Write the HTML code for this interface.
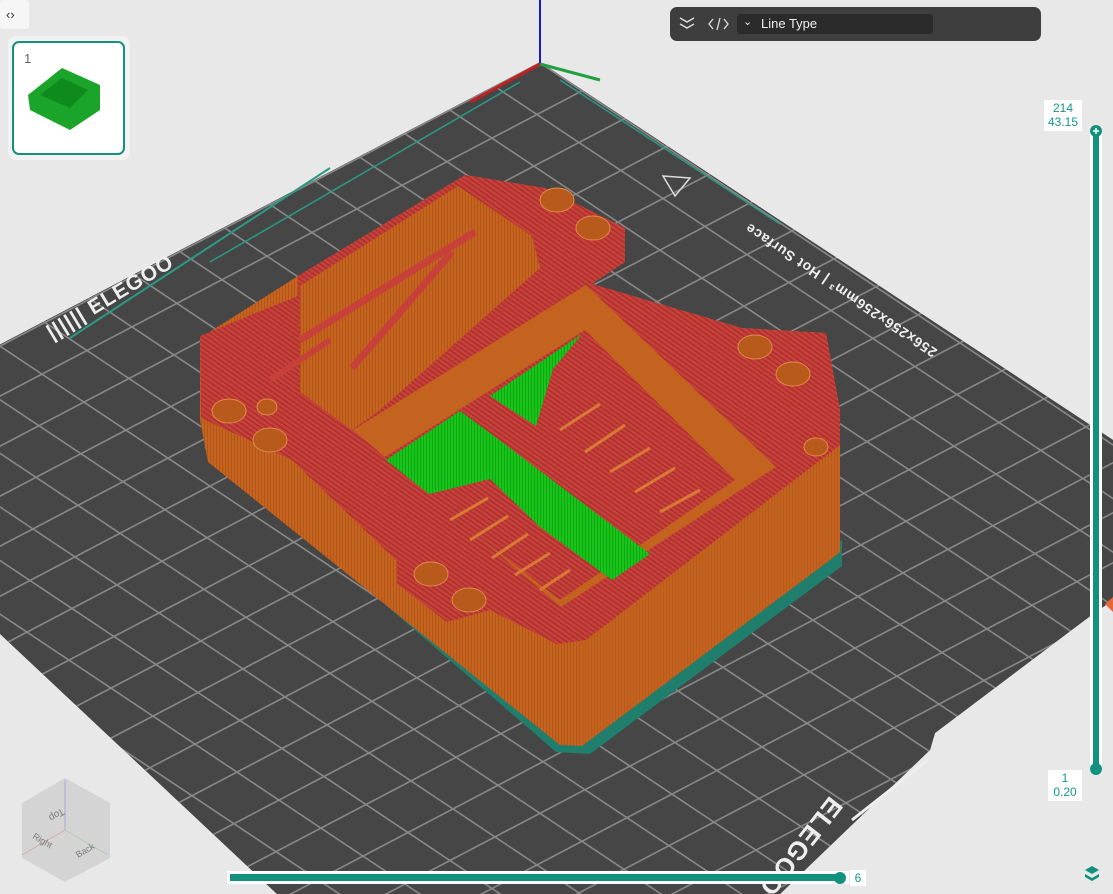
<!DOCTYPE html>
<html><head><meta charset="utf-8"><style>
html,body{margin:0;padding:0;width:1113px;height:894px;overflow:hidden;background:#e8e8e8;font-family:"Liberation Sans",sans-serif}
svg{position:absolute;left:0;top:0}
.tb{position:absolute;left:670px;top:7px;width:371px;height:34px;background:#3e3e3e;border-radius:7px}
.dd{position:absolute;left:737px;top:14px;width:196px;height:20px;background:#2b2b2b;border-radius:3px;color:#eee;font-size:13px;line-height:20px}
.lbl{position:absolute;background:#fff;color:#15968a;font-size:12px;text-align:center;line-height:14px}
</style></head><body>
<svg width="1113" height="894" viewBox="0 0 1113 894">
<defs>
<pattern id="grid" width="100" height="100" patternUnits="userSpaceOnUse" patternTransform="matrix(0.42 0.28 -0.45 0.236 540 62)">
<rect width="100" height="100" fill="#464646"/>
<rect x="0" y="0" width="100" height="3.5" fill="#8a8a8a"/>
<rect x="0" y="0" width="3.5" height="100" fill="#8a8a8a"/>
</pattern>
<pattern id="red" width="4" height="4" patternUnits="userSpaceOnUse" patternTransform="rotate(35)">
<rect width="4" height="4" fill="#c8403a"/><rect width="4" height="1.4" fill="#a8302e"/>
</pattern>
<pattern id="org" width="3" height="6" patternUnits="userSpaceOnUse">
<rect width="3" height="6" fill="#c6631f"/><rect width="1" height="6" fill="#b2561a"/>
</pattern>
<pattern id="grn" width="3" height="3" patternUnits="userSpaceOnUse">
<rect width="3" height="3" fill="#19c41a"/><rect width="1" height="3" fill="#10a812"/>
</pattern>
<clipPath id="bedc"><polygon points="540,62 1113,440 1113,600 1089,617 935,733 930,750 780,894 277,894 -198,448"/></clipPath>
</defs>
<polygon points="540,62 1113,440 1113,600 1089,617 935,733 930,750 780,894 277,894 -198,448" fill="#464646"/>
<rect x="0" y="0" width="1113" height="894" fill="url(#grid)" clip-path="url(#bedc)"/>
<line x1="70" y1="338" x2="330" y2="168" stroke="#2a9a86" stroke-width="2"/>
<line x1="210" y1="262" x2="520" y2="82" stroke="#2a9a86" stroke-width="1.5"/>
<line x1="560" y1="80" x2="780" y2="224" stroke="#2a9a86" stroke-width="1.5"/>
<line x1="928" y1="760" x2="852" y2="820" stroke="#eee" stroke-width="3"/>
<g fill="#eee" font-weight="bold">
<text x="0" y="0" font-size="21" letter-spacing="1" transform="translate(52,340) rotate(-31)">|||||| ELEGOO</text>
<text x="0" y="0" font-size="14" letter-spacing="0.8" transform="translate(938,350) rotate(-146)">256x256x256mm³ | Hot Surface</text>
<text x="0" y="0" font-size="26" letter-spacing="1" transform="translate(830,795) rotate(128)">ELEGOO</text>
</g>
<polygon points="663,176 690,178 675,196" fill="none" stroke="#ddd" stroke-width="1.5"/>
<line x1="540" y1="0" x2="540" y2="64" stroke="#1a1ad0" stroke-width="2"/>
<line x1="540" y1="64" x2="470" y2="102" stroke="#c02020" stroke-width="3"/>
<line x1="540" y1="64" x2="600" y2="80" stroke="#20a040" stroke-width="3"/>
<polygon points="204,448 556,752 590,754 842,566 842,540 836,545 582,736 208,440" fill="#1f7e6c"/>
<polygon points="200,338 298,276 465,175 545,188 625,228 625,262 592,284 742,328 826,333 840,410 840,552 830,560 582,746 560,745 208,462 200,420" fill="url(#org)"/>
<polygon points="582,640 840,450 840,552 830,560 582,746" fill="#c2611e" opacity="0.6"/>
<polygon points="200,336 258,312 298,296 298,276 465,175 545,188 625,228 625,262 592,284 742,328 826,333 840,410 840,445 586,640 557,644 490,610 447,622 397,584 397,561 292,460 201,418" fill="url(#red)"/>
<polygon points="300,286 458,186 532,236 540,268 380,410 352,430 300,392" fill="url(#org)"/>
<line x1="352" y1="368" x2="452" y2="252" stroke="#c8403a" stroke-width="7"/>
<line x1="300" y1="340" x2="475" y2="232" stroke="#c8403a" stroke-width="7"/>
<line x1="270" y1="380" x2="330" y2="340" stroke="#c8403a" stroke-width="6"/>
<polygon points="353,430 586,285 776,467 561,607" fill="#c4621f"/>
<polygon points="380,460 585,330 735,480 560,600" fill="url(#red)"/>
<g stroke="#d87a35" stroke-width="3">
<line x1="450" y1="520" x2="488" y2="498"/><line x1="470" y1="540" x2="508" y2="516"/><line x1="492" y1="558" x2="528" y2="534"/><line x1="515" y1="575" x2="550" y2="553"/><line x1="540" y1="590" x2="570" y2="570"/>
<line x1="560" y1="430" x2="600" y2="404"/><line x1="585" y1="452" x2="625" y2="425"/><line x1="610" y1="472" x2="650" y2="448"/><line x1="635" y1="492" x2="675" y2="468"/><line x1="660" y1="512" x2="700" y2="490"/>
</g>
<polygon points="386,460 460,411 490,433 650,554 612,580 540,527 490,479 429,494" fill="url(#grn)"/>
<polygon points="490,396 582,334 553,369 536,426" fill="url(#grn)"/>
<g fill="#b85a1c" stroke="#e08a4a" stroke-width="1">
<ellipse cx="557" cy="200" rx="17" ry="12"/><ellipse cx="593" cy="228" rx="17" ry="12"/>
<ellipse cx="755" cy="347" rx="17" ry="12"/><ellipse cx="793" cy="374" rx="17" ry="12"/>
<ellipse cx="816" cy="447" rx="12" ry="9"/>
<ellipse cx="229" cy="411" rx="17" ry="12"/><ellipse cx="267" cy="407" rx="10" ry="8"/><ellipse cx="270" cy="440" rx="17" ry="12"/>
<ellipse cx="431" cy="574" rx="17" ry="12"/><ellipse cx="469" cy="600" rx="17" ry="12"/>
</g>
<g opacity="0.6">
<polygon points="65,778 110,803 110,858 65,882 22,858 22,803" fill="#c8c8c8"/>
<line x1="65" y1="830" x2="65" y2="780" stroke="#8080d0"/><line x1="65" y1="830" x2="22" y2="855" stroke="#d08080"/><line x1="65" y1="830" x2="108" y2="855" stroke="#80c080"/>
<text x="0" y="0" font-size="10" fill="#333" transform="translate(62,808) rotate(150)">Top</text>
<text x="0" y="0" font-size="9" fill="#333" transform="translate(32,838) rotate(30)">Right</text>
<text x="0" y="0" font-size="9" fill="#333" transform="translate(78,858) rotate(-30)">Back</text>
</g>
<rect x="1090" y="130" width="12" height="642" fill="#fff"/>
<rect x="1093" y="130" width="6" height="640" fill="#12917f"/>
<circle cx="1096" cy="131" r="6" fill="#12917f"/><path d="M1093 131h6M1096 128v6" stroke="#fff" stroke-width="1.5"/>
<circle cx="1096" cy="769" r="6" fill="#12917f"/>
<rect x="227" y="871" width="622" height="13" fill="#fff"/>
<rect x="230" y="874" width="612" height="7" fill="#12917f"/>
<circle cx="840" cy="878" r="6" fill="#12917f"/>
<g fill="#12917f"><path d="M1092 866l7 4-7 4-7-4z"/><path d="M1085 874l7 4 7-4v3l-7 4-7-4z"/></g>
<rect x="8" y="36" width="122" height="124" rx="8" fill="#f2f2f2"/>
<rect x="13" y="42" width="111" height="112" rx="6" fill="#fff" stroke="#14907e" stroke-width="2"/>
<text x="24" y="63" font-size="13" fill="#666">1</text>
<polygon points="28,95 62,68 100,85 100,110 70,130 30,110" fill="#1aa52a"/>
<polygon points="40,95 62,78 88,90 70,108" fill="#0f8a1c"/>
<rect x="0" y="0" width="29" height="29" rx="3" fill="#f6f6f6"/>
<text x="6" y="19" font-size="13" fill="#333">‹›</text>
<polygon points="1105,604 1113,597 1113,612" fill="#e8683a"/>
</svg>
<div class="tb"></div>
<svg width="60" height="30" style="left:676px;top:10px">
<path d="M4 8l7 4 7-4M4 14l7 4 7-4" stroke="#ddd" stroke-width="1.5" fill="none"/>
<path d="M37 9l-4 5 4 5M48 9l4 5-4 5M44 8l-3 12" stroke="#ddd" stroke-width="1.3" fill="none"/>
</svg>
<div class="dd"><span style="position:absolute;left:6px;top:-2px;font-size:11px">⌄</span><span style="position:absolute;left:24px">Line Type</span></div>
<div class="lbl" style="left:1044px;top:100px;width:38px;height:30px;padding-top:1px">214<br>43.15</div>
<div class="lbl" style="left:1048px;top:770px;width:34px;height:30px;padding-top:1px">1<br>0.20</div>
<div class="lbl" style="left:850px;top:870px;width:16px;height:16px;line-height:16px">6</div>
</body></html>
